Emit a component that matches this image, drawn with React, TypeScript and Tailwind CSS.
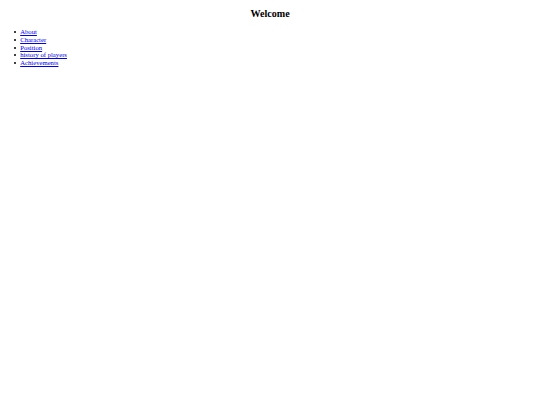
export default function App() {
  const links = ['About', 'Character', 'Position', 'history of players', 'Achievements'];

  return (
    <div className="m-[3.4px] font-['Liberation_Serif',serif] text-[6.7px] leading-[1.15] text-black">
      <h2 className="my-[8.4px] text-center text-[10.1px] font-bold leading-[1.15]">Welcome</h2>
      <ul className="my-[6.7px] pl-[10.6px]">
        {links.map((label) => (
          <li key={label} className="flex items-center">
            <span className="flex w-[6.2px] shrink-0 items-center">
              <span className="h-[2.2px] w-[2.2px] rounded-full bg-black" />
            </span>
            <a href="#" className="text-[#0000ee] underline">
              {label}
            </a>
          </li>
        ))}
      </ul>
    </div>
  );
}
